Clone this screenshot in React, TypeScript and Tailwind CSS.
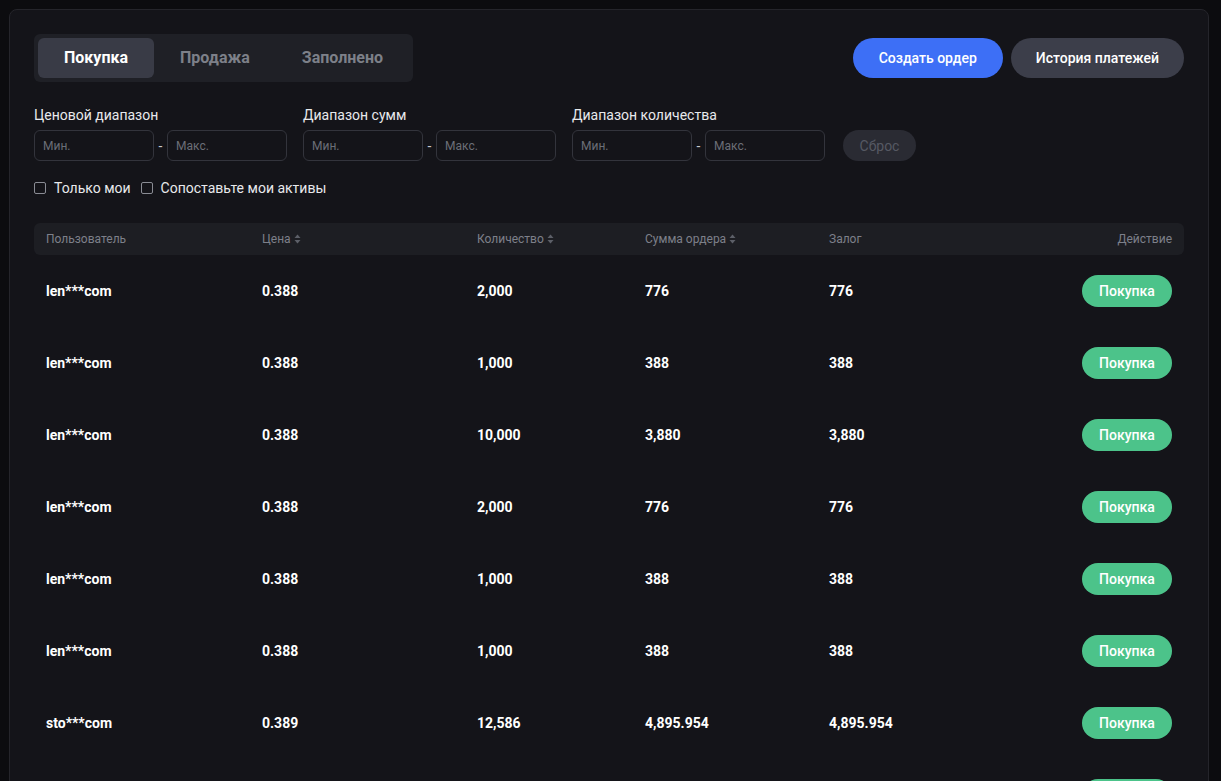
import React from 'react';

type Row = { user: string; price: string; qty: string; sum: string; deposit: string };

const rows: Row[] = [
  { user: 'len***com', price: '0.388', qty: '2,000', sum: '776', deposit: '776' },
  { user: 'len***com', price: '0.388', qty: '1,000', sum: '388', deposit: '388' },
  { user: 'len***com', price: '0.388', qty: '10,000', sum: '3,880', deposit: '3,880' },
  { user: 'len***com', price: '0.388', qty: '2,000', sum: '776', deposit: '776' },
  { user: 'len***com', price: '0.388', qty: '1,000', sum: '388', deposit: '388' },
  { user: 'len***com', price: '0.388', qty: '1,000', sum: '388', deposit: '388' },
  { user: 'sto***com', price: '0.389', qty: '12,586', sum: '4,895.954', deposit: '4,895.954' },
  { user: 'sto***com', price: '0.389', qty: '5,000', sum: '1,945', deposit: '1,945' },
];

const cols = 'grid grid-cols-[216px_215px_168px_184px_1fr] items-center px-3';

function SortIcon() {
  return (
    <svg width="7" height="10" viewBox="0 0 7 10" className="ml-[3px] inline-block">
      <path d="M3.5 0.5 L6.5 4 H0.5 Z" fill="#5c5f68" />
      <path d="M3.5 9.5 L6.5 6 H0.5 Z" fill="#5c5f68" />
    </svg>
  );
}

function RangeFilter({ label }: { label: string }) {
  return (
    <div className="flex flex-col">
      <span className="mb-[5px] text-sm leading-5 text-[#e8e9ec]">{label}</span>
      <div className="flex items-center">
        <input
          placeholder="Мин."
          className="h-[31px] w-[120px] rounded-md border border-[#33343c] bg-transparent pl-2 text-xs text-white outline-none placeholder:text-[#6b6e77]"
        />
        <span className="w-[13px] text-center text-sm text-[#c9cad0]">-</span>
        <input
          placeholder="Макс."
          className="h-[31px] w-[120px] rounded-md border border-[#33343c] bg-transparent pl-2 text-xs text-white outline-none placeholder:text-[#6b6e77]"
        />
      </div>
    </div>
  );
}

function Check({ label }: { label: string }) {
  return (
    <label className="flex items-center gap-2 text-sm text-[#e8e9ec]">
      <span className="h-3 w-3 rounded-[2px] border border-[#8a8c94]" />
      {label}
    </label>
  );
}

export default function App() {
  return (
    <div className="min-h-screen overflow-hidden bg-[#0c0c0f] pl-[9px] pt-[9px] font-['Roboto',sans-serif]">
      <div className="min-h-[780px] w-[1200px] rounded-lg border border-[#25252b] bg-[#141419] px-6 pt-6">
        <div className="flex items-center justify-between">
          <div className="flex h-12 items-center rounded-md bg-[#1f2026] p-1">
            <button className="h-10 rounded-md bg-[#393b46] px-[26px] text-base font-bold text-white">Покупка</button>
            <button className="h-10 px-[26px] text-base font-bold text-[#7d8089]">Продажа</button>
            <button className="h-10 px-[26px] text-base font-bold text-[#7d8089]">Заполнено</button>
          </div>
          <div className="flex items-center gap-2">
            <button className="h-10 rounded-full bg-[#3d6ff6] px-[26px] text-sm font-medium text-white">Создать ордер</button>
            <button className="h-10 rounded-full bg-[#3c3e4a] px-[25px] text-sm font-medium text-white">История платежей</button>
          </div>
        </div>

        <div className="mt-[23px] flex items-end gap-4">
          <RangeFilter label="Ценовой диапазон" />
          <RangeFilter label="Диапазон сумм" />
          <RangeFilter label="Диапазон количества" />
          <button className="ml-[2px] h-[31px] w-[73px] rounded-full bg-[#2a2b33] text-sm text-[#565963]">Сброс</button>
        </div>

        <div className="mt-[17px] flex items-center gap-[10px]">
          <Check label="Только мои" />
          <Check label="Сопоставьте мои активы" />
        </div>

        <div className={`${cols} mt-[25px] h-8 rounded-md bg-[#1d1e23] text-xs text-[#7d808a]`}>
          <span>Пользователь</span>
          <span className="flex items-center">Цена<SortIcon /></span>
          <span className="flex items-center">Количество<SortIcon /></span>
          <span className="flex items-center">Сумма ордера<SortIcon /></span>
          <div className="flex justify-between">
            <span>Залог</span>
            <span>Действие</span>
          </div>
        </div>

        {rows.map((r, i) => (
          <div key={i} className={`${cols} h-[72px] text-sm font-bold text-white`}>
            <span>{r.user}</span>
            <span>{r.price}</span>
            <span>{r.qty}</span>
            <span>{r.sum}</span>
            <div className="flex items-center justify-between">
              <span>{r.deposit}</span>
              <button className="h-8 w-[90px] rounded-full bg-[#4cc38a] text-sm font-medium text-white">Покупка</button>
            </div>
          </div>
        ))}
      </div>
    </div>
  );
}
